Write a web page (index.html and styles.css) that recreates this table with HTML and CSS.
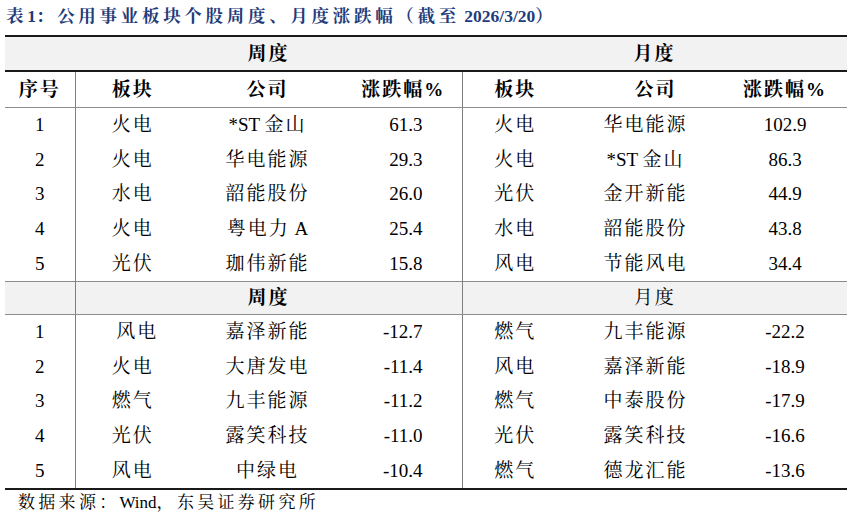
FILE: index.html
```html
<!DOCTYPE html>
<html lang="zh-CN">
<head>
<meta charset="utf-8">
<link rel="stylesheet" href="styles.css">
</head>
<body>
<div class="page">
  <div class="title">表<span class="lat">1</span>：公用事业板块个股周度、月度涨跌幅（截至<span class="lat"> 2026/3/20</span>）</div>
  <table class="tbl">
    <colgroup>
      <col class="c-no"><col class="c-l1"><col class="c-l2"><col class="c-l3">
      <col class="c-r1"><col class="c-r2"><col class="c-r3">
    </colgroup>
    <tr class="band band-top">
      <td></td>
      <td colspan="3" class="b">周度</td>
      <td colspan="3" class="b">月度</td>
    </tr>
    <tr class="head">
      <td class="vr">序号</td>
      <td>板块</td><td>公司</td><td class="vr">涨跌幅%</td>
      <td>板块</td><td class="rco">公司</td><td>涨跌幅%</td>
    </tr>
    <tr class="row">
      <td class="vr n">1</td><td>火电</td><td><span class="lat">*ST </span>金山</td><td class="num vr">61.3</td>
      <td>火电</td><td>华电能源</td><td class="n">102.9</td>
    </tr>
    <tr class="row">
      <td class="vr n">2</td><td>火电</td><td>华电能源</td><td class="num vr">29.3</td>
      <td>火电</td><td><span class="lat">*ST </span>金山</td><td class="n">86.3</td>
    </tr>
    <tr class="row">
      <td class="vr n">3</td><td>水电</td><td>韶能股份</td><td class="num vr">26.0</td>
      <td>光伏</td><td>金开新能</td><td class="n">44.9</td>
    </tr>
    <tr class="row">
      <td class="vr n">4</td><td>火电</td><td>粤电力<span class="lat"> A</span></td><td class="num vr">25.4</td>
      <td>水电</td><td>韶能股份</td><td class="n">43.8</td>
    </tr>
    <tr class="row">
      <td class="vr n">5</td><td>光伏</td><td>珈伟新能</td><td class="num vr">15.8</td>
      <td>风电</td><td>节能风电</td><td class="n">34.4</td>
    </tr>
    <tr class="band band-mid">
      <td class="vr"></td>
      <td colspan="3" class="b vr">周度</td>
      <td colspan="3">月度</td>
    </tr>
    <tr class="row">
      <td class="vr n">1</td><td class="shift">风电</td><td>嘉泽新能</td><td class="num vr">-12.7</td>
      <td>燃气</td><td>九丰能源</td><td class="n">-22.2</td>
    </tr>
    <tr class="row">
      <td class="vr n">2</td><td>火电</td><td>大唐发电</td><td class="num vr">-11.4</td>
      <td>风电</td><td>嘉泽新能</td><td class="n">-18.9</td>
    </tr>
    <tr class="row">
      <td class="vr n">3</td><td>燃气</td><td>九丰能源</td><td class="num vr">-11.2</td>
      <td>燃气</td><td>中泰股份</td><td class="n">-17.9</td>
    </tr>
    <tr class="row">
      <td class="vr n">4</td><td>光伏</td><td>露笑科技</td><td class="num vr">-11.0</td>
      <td>光伏</td><td>露笑科技</td><td class="n">-16.6</td>
    </tr>
    <tr class="row last">
      <td class="vr n">5</td><td>风电</td><td>中绿电</td><td class="num vr">-10.4</td>
      <td>燃气</td><td>德龙汇能</td><td class="n">-13.6</td>
    </tr>
  </table>
  <div class="source">数据来源：<span class="lat">Wind</span>，东吴证券研究所</div>
</div>
</body>
</html>
```

FILE: styles.css
```css
html, body {
  margin: 0;
  padding: 0;
  background: #ffffff;
}

.page {
  width: 852px;
  height: 519px;
  padding: 0 5px;
  box-sizing: border-box;
  font-family: "Liberation Serif", "Noto Serif CJK SC", "Noto Sans CJK SC", serif;
  color: #000;
}

.lat {
  letter-spacing: 0;
}

.title {
  height: 35px;
  padding-left: 1px;
  line-height: 32px;
  font-size: 17.5px;
  font-weight: bold;
  letter-spacing: 3.7px;
  color: #1f3d7a;
  white-space: nowrap;
}

.tbl {
  width: 842px;
  border-collapse: collapse;
  table-layout: fixed;
  border-top: 2px solid #1a1a1a;
  border-bottom: 2px solid #1a1a1a;
  font-size: 19px;
}

.c-no { width: 70px; }
.c-l1 { width: 115px; }
.c-l2 { width: 155px; }
.c-l3 { width: 117px; }
.c-r1 { width: 106px; }
.c-r2 { width: 155px; }
.c-r3 { width: 124px; }

.tbl td {
  padding: 0;
  text-align: center;
  white-space: nowrap;
  line-height: 22px;
  letter-spacing: 2px;
}

.tbl td.n,
.tbl td.num {
  letter-spacing: 0;
}

.tbl td.vr {
  border-right: 1px solid #7f7f7f;
}

.band td {
  background: #f2f2f2;
}

.band-top td {
  height: 33px;
  border-bottom: 2px solid #1a1a1a;
}

.band-top td.b,
.head td,
.band-mid td.b {
  font-weight: bold;
}

.head td {
  height: 35px;
  border-bottom: 1px solid #8c8c8c;
}

.head td.rco {
  padding-left: 20px;
}

.row td {
  height: 34.6px;
}

.row td.num {
  text-align: right;
  padding-right: 39px;
}

.row td.shift {
  padding-left: 9px;
}

.band-mid td {
  height: 32px;
  border-top: 1px solid #8c8c8c;
  border-bottom: 1px solid #8c8c8c;
}

.source {
  padding: 3px 0 0 13px;
  font-size: 17px;
  letter-spacing: 3.3px;
  line-height: 20px;
  white-space: nowrap;
}
```
